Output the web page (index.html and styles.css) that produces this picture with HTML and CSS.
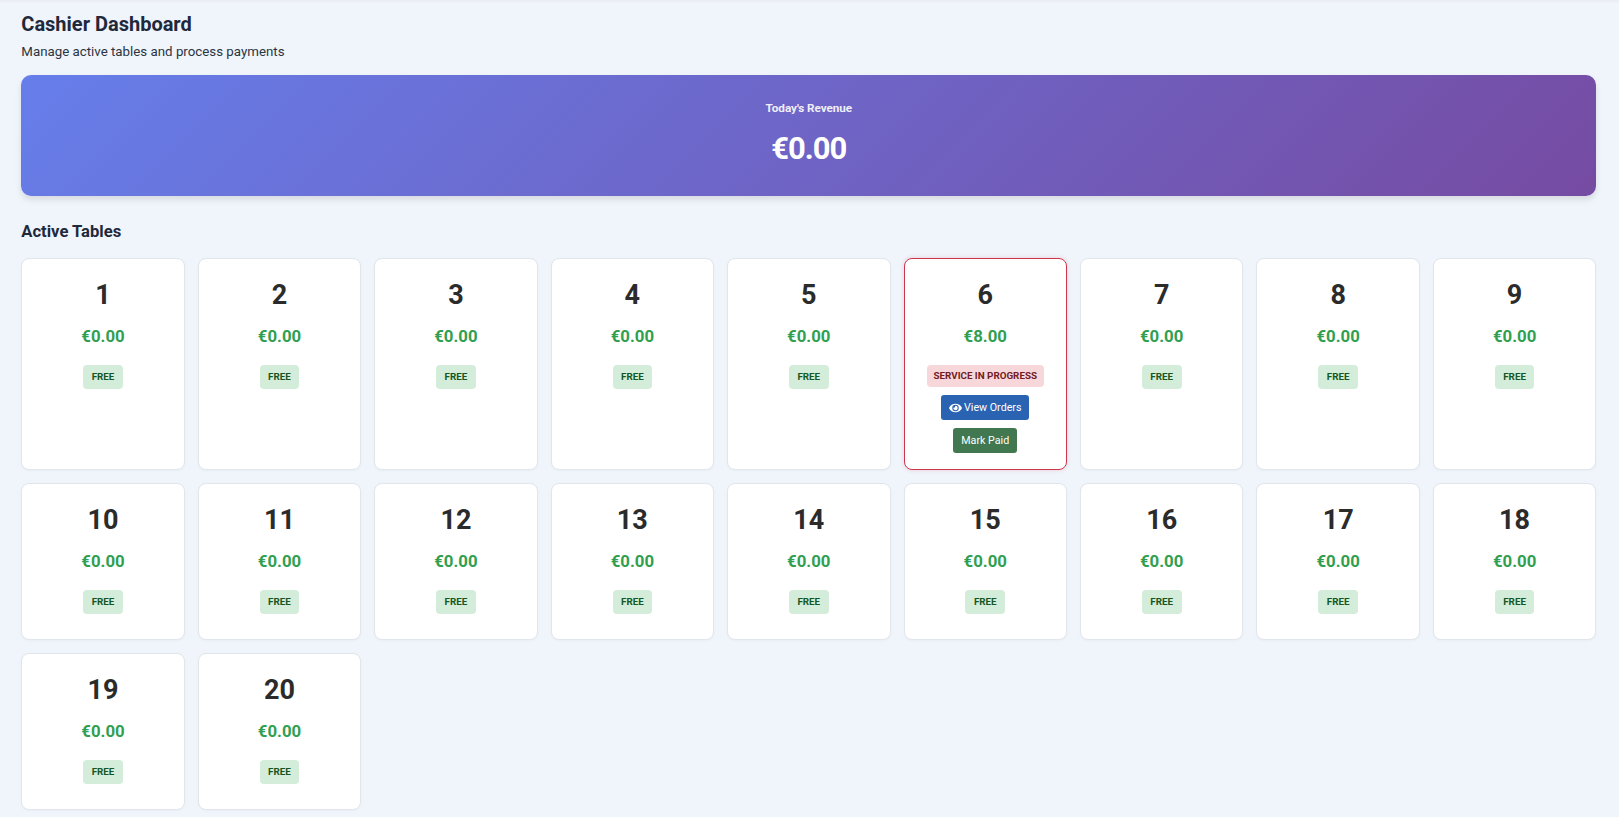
FILE: index.html
```html
<!DOCTYPE html>
<html lang="en">
<head>
  <meta charset="UTF-8">
  <title>Cashier Dashboard</title>
  <link rel="stylesheet" href="styles.css">
</head>
<body>
  <div class="top-edge"></div>
  <main class="page">
    <h1>Cashier Dashboard</h1>
    <p class="subtitle">Manage active tables and process payments</p>

    <section class="revenue">
      <div class="revenue-label">Today's Revenue</div>
      <div class="revenue-value">€0.00</div>
    </section>

    <h2>Active Tables</h2>
    <div class="tables">
      <div class="table-card"><div class="num">1</div><div class="amount">€0.00</div><span class="badge free">FREE</span></div>
      <div class="table-card"><div class="num">2</div><div class="amount">€0.00</div><span class="badge free">FREE</span></div>
      <div class="table-card"><div class="num">3</div><div class="amount">€0.00</div><span class="badge free">FREE</span></div>
      <div class="table-card"><div class="num">4</div><div class="amount">€0.00</div><span class="badge free">FREE</span></div>
      <div class="table-card"><div class="num">5</div><div class="amount">€0.00</div><span class="badge free">FREE</span></div>
      <div class="table-card busy">
        <div class="num">6</div>
        <div class="amount">€8.00</div>
        <span class="badge service">SERVICE IN PROGRESS</span>
        <button class="btn btn-blue">
          <svg class="eye" viewBox="0 0 576 512"><path fill="currentColor" d="M572.5 241.4C518.3 135.6 410.9 64 288 64S57.7 135.6 3.5 241.4a32.4 32.4 0 0 0 0 29.2C57.7 376.4 165.1 448 288 448s230.3-71.6 284.5-177.4a32.4 32.4 0 0 0 0-29.2zM288 400a144 144 0 1 1 144-144 143.9 143.9 0 0 1-144 144zm0-240a95.3 95.3 0 0 0-25.3 3.8 47.9 47.9 0 0 1-66.9 66.9A95.8 95.8 0 1 0 288 160z"/></svg>
          View Orders
        </button>
        <button class="btn btn-green">Mark Paid</button>
      </div>
      <div class="table-card"><div class="num">7</div><div class="amount">€0.00</div><span class="badge free">FREE</span></div>
      <div class="table-card"><div class="num">8</div><div class="amount">€0.00</div><span class="badge free">FREE</span></div>
      <div class="table-card"><div class="num">9</div><div class="amount">€0.00</div><span class="badge free">FREE</span></div>
      <div class="table-card"><div class="num">10</div><div class="amount">€0.00</div><span class="badge free">FREE</span></div>
      <div class="table-card"><div class="num">11</div><div class="amount">€0.00</div><span class="badge free">FREE</span></div>
      <div class="table-card"><div class="num">12</div><div class="amount">€0.00</div><span class="badge free">FREE</span></div>
      <div class="table-card"><div class="num">13</div><div class="amount">€0.00</div><span class="badge free">FREE</span></div>
      <div class="table-card"><div class="num">14</div><div class="amount">€0.00</div><span class="badge free">FREE</span></div>
      <div class="table-card"><div class="num">15</div><div class="amount">€0.00</div><span class="badge free">FREE</span></div>
      <div class="table-card"><div class="num">16</div><div class="amount">€0.00</div><span class="badge free">FREE</span></div>
      <div class="table-card"><div class="num">17</div><div class="amount">€0.00</div><span class="badge free">FREE</span></div>
      <div class="table-card"><div class="num">18</div><div class="amount">€0.00</div><span class="badge free">FREE</span></div>
      <div class="table-card"><div class="num">19</div><div class="amount">€0.00</div><span class="badge free">FREE</span></div>
      <div class="table-card"><div class="num">20</div><div class="amount">€0.00</div><span class="badge free">FREE</span></div>
    </div>
  </main>
</body>
</html>
```

FILE: styles.css
```css
html, body {
  height: 817px;
  overflow: hidden;
}
body {
  margin: 0;
  font-family: Roboto, sans-serif;
  background-color: #f0f4fb;
  color: #212529;
}
.top-edge {
  height: 3px;
  background: linear-gradient(#e9ecf1, #f0f4fb);
}
.page {
  padding: 9px 22.7px 0 21.3px;
}
h1 {
  margin: 0;
  font-size: 20px;
  line-height: 24px;
  font-weight: 700;
  color: #1e293b;
}
.subtitle {
  margin: 7px 0 14px;
  font-size: 13.3px;
  line-height: 18px;
  color: #2b3442;
}
.revenue {
  height: 121px;
  box-sizing: border-box;
  padding-top: 25px;
  border-radius: 10px;
  text-align: center;
  color: #fff;
  background: linear-gradient(135deg, #667eea 0%, #764ba2 100%);
  box-shadow: 0 4px 6px rgba(0, 0, 0, 0.1);
}
.revenue-label {
  font-size: 11.7px;
  line-height: 16px;
  font-weight: 700;
  letter-spacing: -0.05px;
  opacity: 0.9;
}
.revenue-value {
  margin-top: 14px;
  font-size: 31px;
  line-height: 37px;
  font-weight: 700;
  letter-spacing: -1px;
}
h2 {
  margin: 26px 0 17px;
  font-size: 16.6px;
  line-height: 19px;
  font-weight: 700;
  color: #1e293b;
}
.tables {
  display: grid;
  grid-template-columns: repeat(9, 1fr);
  gap: 13px;
}
.table-card {
  display: flex;
  flex-direction: column;
  align-items: center;
  box-sizing: border-box;
  min-height: 157px;
  padding: 20px 8px 24px;
  background: #fff;
  border: 1px solid #e1e5ec;
  border-radius: 8px;
  box-shadow: 0 1px 3px rgba(0, 0, 0, 0.03);
}
.table-card.busy {
  border-color: #c9374f;
  padding-bottom: 16px;
  box-shadow: 0 0 4px rgba(220, 53, 69, 0.2);
}
.num {
  font-size: 27px;
  line-height: 32px;
  font-weight: 700;
  color: #2b2b2b;
}
.amount {
  margin-top: 15px;
  font-size: 16.8px;
  line-height: 20px;
  font-weight: 700;
  color: #30a050;
}
.badge {
  margin-top: 19px;
  padding: 6px 8.5px;
  border-radius: 4px;
  font-size: 9.8px;
  line-height: 12px;
  font-weight: 700;
}
.badge.free {
  background-color: #d4edda;
  color: #155724;
}
.badge.service {
  background-color: #f8d7da;
  color: #721c24;
  padding: 5px 7px;
}
.btn {
  margin-top: 8px;
  padding: 0 8px;
  height: 25px;
  border: none;
  border-radius: 3px;
  font-family: Roboto, sans-serif;
  font-size: 10.7px;
  color: #fff;
  display: flex;
  align-items: center;
  gap: 2px;
}
.btn-blue {
  background-color: #2a63b1;
}
.btn-green {
  background-color: #41784f;
}
.eye {
  width: 13px;
  height: 12px;
}
```
